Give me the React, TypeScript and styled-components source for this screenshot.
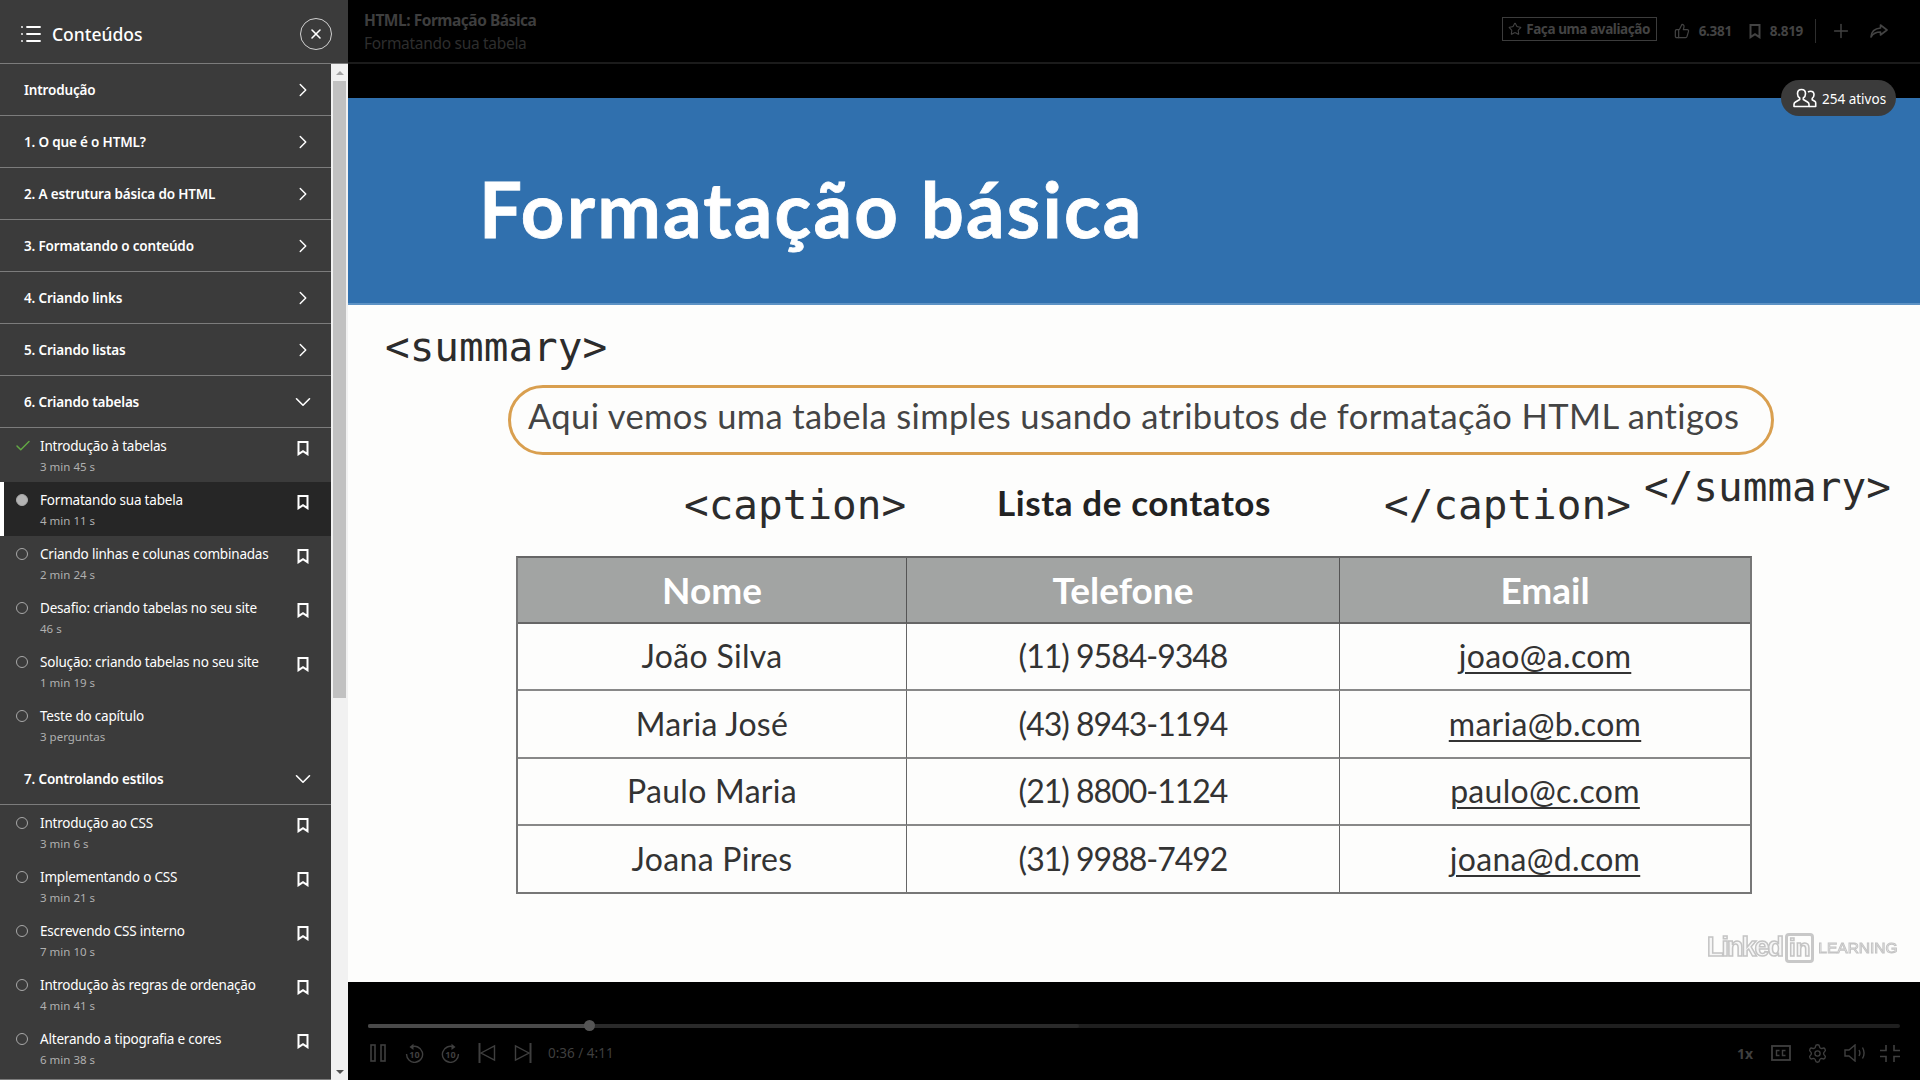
import React from 'react';
import styled, { createGlobalStyle } from 'styled-components';
import { Check, ChevronDown, ChevronRight, List, Plus, Settings, Star, ThumbsUp, X } from 'lucide-react';

const UI_FONT = '"Noto Sans", "Open Sans", sans-serif';
const MONO_FONT = '"DejaVu Sans Mono", "Liberation Mono", monospace';
const SLIDE_FONT = 'Lato, "Noto Sans", sans-serif';

const GlobalStyle = createGlobalStyle`
  html, body { margin: 0; padding: 0; height: 100%; background: #000; overflow: hidden; }
  * { box-sizing: border-box; }
`;

const Page = styled.div`
  display: flex;
  width: 1920px;
  height: 1080px;
  overflow: hidden;
  background: #000;
  font-family: ${UI_FONT};
`;

/* ---------- sidebar ---------- */

const Sidebar = styled.aside`
  flex: 0 0 348px;
  height: 100%;
  display: flex;
  flex-direction: column;
  background: #3b3b3b;
  color: #fff;
`;

const SidebarHead = styled.header`
  flex: 0 0 64px;
  display: flex;
  align-items: center;
  padding: 4px 16px 0 19px;
  border-bottom: 1px solid #7c7c7c;
`;

const SidebarTitle = styled.h2`
  flex: 1;
  margin: 0 0 0 9px;
  font-size: 17.5px;
  font-weight: 500;
`;

const CloseButton = styled.button`
  width: 32px;
  height: 32px;
  padding: 0;
  display: flex;
  align-items: center;
  justify-content: center;
  border: 1px solid #d0d0d0;
  border-radius: 50%;
  background: transparent;
  color: #fff;
`;

const SidebarBody = styled.div`
  flex: 1;
  min-height: 0;
  display: flex;
`;

const Toc = styled.div`
  flex: 0 0 331px;
  height: 1016px;
  overflow: hidden;
  border-bottom: 1px solid #7c7c7c;
`;

const SectionRow = styled.div`
  height: 52px;
  display: flex;
  align-items: center;
  justify-content: space-between;
  padding: 1px 17px 0 24px;
  border-bottom: 1px solid #7c7c7c;
  font-size: 13.5px;
  font-weight: 600;
  letter-spacing: -0.17px;
`;

const OpenChevron = styled(ChevronDown)`
  margin-right: -2px;
`;

const LessonGroup = styled.div`
  padding-bottom: 1px;
`;

const ItemRow = styled.div<{ $active?: boolean }>`
  height: 54px;
  display: flex;
  padding: 9px 22px 0 ${(p) => (p.$active ? 12 : 16)}px;
  background: ${(p) => (p.$active ? '#262626' : 'transparent')};
  border-left: ${(p) => (p.$active ? '4px solid #fff' : 'none')};
`;

const StatusSlot = styled.div`
  flex: 0 0 24px;
  height: 18px;
  display: flex;
  align-items: center;
`;

const DoneMark = styled(Check)`
  margin-left: -2px;
  flex-shrink: 0;
`;

const Radio = styled.span<{ $filled?: boolean }>`
  width: 12px;
  height: 12px;
  border-radius: 50%;
  border: 1px solid #a8a8a8;
  background: ${(p) => (p.$filled ? '#b4b4b4' : 'transparent')};
`;

const ItemText = styled.div`
  flex: 1;
  min-width: 0;
`;

const ItemTitle = styled.div`
  font-size: 13.5px;
  line-height: 18px;
  letter-spacing: -0.2px;
  white-space: nowrap;
`;

const ItemTime = styled.div`
  margin-top: 4px;
  font-size: 11.5px;
  line-height: 15px;
  color: #b0b0b0;
`;

const MarkSlot = styled.span`
  display: flex;
  margin-top: 4px;
  height: 15px;
`;

const Scrollbar = styled.div`
  flex: 0 0 17px;
  display: flex;
  flex-direction: column;
  align-items: center;
  background: #f1f1f1;
`;

const ScrollArrow = styled.div<{ $down?: boolean }>`
  flex: 0 0 17px;
  display: flex;
  align-items: center;
  justify-content: center;
  &::before {
    content: '';
    border-left: 4px solid transparent;
    border-right: 4px solid transparent;
    ${(p) => (p.$down ? 'border-top: 4px solid #505050;' : 'border-bottom: 4px solid #a3a3a3;')}
  }
`;

const ScrollThumb = styled.div`
  flex: 0 0 617px;
  width: 13px;
  margin-right: 1px;
  background: #c1c1c1;
`;

const ScrollRest = styled.div`
  flex: 1;
`;

/* ---------- main column ---------- */

const Main = styled.main`
  flex: 1;
  min-width: 0;
  display: flex;
  flex-direction: column;
  position: relative;
`;

const TopBar = styled.div`
  flex: 0 0 64px;
  display: flex;
  align-items: flex-start;
  justify-content: space-between;
  padding: 8px 32px 0 16px;
  border-bottom: 2px solid #1b1b1b;
`;

const CourseName = styled.div`
  font-size: 15.5px;
  line-height: 24px;
  font-weight: 700;
  letter-spacing: -0.47px;
  color: #3e3e3e;
`;

const LessonName = styled.div`
  font-size: 15.5px;
  line-height: 22px;
  letter-spacing: -0.3px;
  color: #2e2e2e;
`;

const TopActions = styled.div`
  display: flex;
  align-items: center;
  height: 38px;
  margin-top: 4px;
  color: #434343;
`;

const RateButton = styled.div`
  height: 24px;
  width: 155px;
  margin: 0 17px 5px 0;
  display: flex;
  align-items: center;
  justify-content: center;
  gap: 4px;
  border: 1px solid #3c3c3c;
  font-size: 13.5px;
  font-weight: 700;
  letter-spacing: -0.4px;
`;

const Stat = styled.span<{ $gap: number; $mr: number }>`
  display: flex;
  align-items: center;
  gap: ${(p) => p.$gap}px;
  margin-right: ${(p) => p.$mr}px;
  font-size: 13.5px;
  font-weight: 700;
  letter-spacing: -0.3px;
`;

const Divider = styled.span`
  width: 1px;
  height: 24px;
  margin: 0 14px 0 -7px;
  background: #2e2e2e;
`;

const ActionIcon = styled.span`
  display: flex;
  margin-right: 18px;
  &:last-child { margin-right: 0; }
`;

const ActiveBadge = styled.div`
  position: absolute;
  top: 80px;
  right: 24px;
  width: 115px;
  height: 36px;
  display: flex;
  align-items: center;
  gap: 5px;
  padding-left: 12px;
  border-radius: 18px;
  background: #3b3b3b;
  color: #fff;
  font-size: 13.5px;
  z-index: 2;
`;

const BadgeLabel = styled.span`
  margin-top: 2px;
`;

const VideoGap = styled.div`
  flex: 0 0 34px;
`;

const Slide = styled.section`
  flex: 0 0 884px;
  position: relative;
  overflow: hidden;
  background: #fdfdfc;
`;

const SlideBanner = styled.div`
  height: 207px;
  padding: 67px 0 0 131px;
  background: #3070ae;
  border-bottom: 2px solid #5d92c4;
`;

const SlideHeading = styled.h1`
  margin: 0;
  font-family: ${SLIDE_FONT};
  font-size: 76px;
  line-height: 88px;
  font-weight: 700;
  letter-spacing: 2.2px;
  -webkit-text-stroke: 0.8px #fff;
  color: #fff;
`;

const Tag = styled.span<{ $x: number; $y: number }>`
  position: absolute;
  left: ${(p) => p.$x}px;
  top: ${(p) => p.$y}px;
  font-family: ${MONO_FONT};
  font-size: 41px;
  line-height: 46px;
  color: #2c2c2c;
`;

const Callout = styled.div`
  position: absolute;
  left: 160px;
  top: 287px;
  width: 1266px;
  height: 70px;
  display: flex;
  align-items: center;
  padding: 0 0 9px 17px;
  border: 3px solid #d99f4f;
  border-radius: 35px;
  font-family: ${SLIDE_FONT};
  font-size: 34.5px;
  letter-spacing: 0.38px;
  color: #444;
  white-space: nowrap;
`;

const CaptionText = styled.div`
  position: absolute;
  left: 649px;
  top: 382px;
  font-family: ${SLIDE_FONT};
  font-size: 35px;
  line-height: 44px;
  font-weight: 700;
  letter-spacing: 0.6px;
  color: #222;
  white-space: nowrap;
`;

const ContactTable = styled.div`
  position: absolute;
  left: 168px;
  top: 458px;
  width: 1236px;
  display: grid;
  grid-template-columns: 388px 433px 1fr;
  grid-template-rows: 66px repeat(3, 67.4px) 66px;
  border: 2px solid #777;
  border-top-color: #666;
`;

const HeadCell = styled.div`
  display: flex;
  align-items: center;
  justify-content: center;
  padding-bottom: 2px;
  background: #a2a4a3;
  border-left: 1px solid #555;
  border-bottom: 2px solid #666;
  font-family: ${SLIDE_FONT};
  font-size: 37px;
  font-weight: 700;
  color: #fff;
  &:first-child { border-left: none; }
`;

const BodyCell = styled.div<{ $first?: boolean; $last?: boolean; $compact?: boolean }>`
  display: flex;
  align-items: center;
  justify-content: center;
  padding-bottom: 2px;
  border-left: ${(p) => (p.$first ? 'none' : '1px solid #666')};
  border-bottom: ${(p) => (p.$last ? 'none' : '2px solid #888')};
  font-family: ${SLIDE_FONT};
  font-size: 32px;
  letter-spacing: ${(p) => (p.$compact ? '-1px' : '0.3px')};
  color: #333;
`;

const MailLink = styled.span`
  text-decoration: underline;
  text-underline-offset: 4px;
  text-decoration-thickness: 2px;
`;

const Watermark = styled.div`
  position: absolute;
  left: 1359px;
  top: 834px;
  display: flex;
  align-items: center;
  font-family: "Liberation Sans", sans-serif;
  font-weight: 700;
  color: #f6f6f6;
  -webkit-text-stroke: 1.5px #c4c4c4;
  filter: blur(0.7px);
`;

const WatermarkWord = styled.span`
  font-size: 27px;
  letter-spacing: -2px;
`;

const WatermarkBox = styled.span`
  margin: 0 4px 0 3px;
  padding: 0 1px;
  font-size: 24px;
  line-height: 24px;
  border: 3px solid #c8c8c8;
  border-radius: 4px;
`;

const WatermarkSmall = styled.span`
  font-size: 15.5px;
  font-weight: 400;
  -webkit-text-stroke: 1px #c4c4c4;
`;

/* ---------- player controls ---------- */

const Controls = styled.div`
  flex: 1;
  padding: 42px 20px 0;
  color: #3f3f3f;
`;

const Track = styled.div`
  position: relative;
  height: 4px;
  border-radius: 2px;
  background: #1f1f1f;
`;

const TrackFill = styled.div<{ $tone: string }>`
  position: absolute;
  left: 0;
  top: 0;
  bottom: 0;
  border-radius: 2px;
  background: ${(p) => p.$tone};
`;

const Knob = styled.div`
  position: absolute;
  top: -4px;
  width: 11px;
  height: 11px;
  margin-left: -5px;
  border-radius: 50%;
  background: #555;
`;

const ControlRow = styled.div`
  display: flex;
  align-items: center;
  height: 24px;
  margin-top: 13px;
  padding-left: 2px;
`;

const IconSlot = styled.span<{ $w: number; $mr: number }>`
  display: flex;
  justify-content: center;
  width: ${(p) => p.$w}px;
  margin-right: ${(p) => p.$mr}px;
`;

const TimeLabel = styled.span`
  flex: 1;
  font-size: 13.5px;
`;

const SpeedLabel = styled.span`
  margin-right: 18px;
  font-size: 14px;
  font-weight: 700;
`;

const BookmarkIcon = ({ color = '#fff' }: { color?: string }) => (
  <svg width="12" height="15" viewBox="0 0 12 15" fill="none" stroke={color} strokeWidth="2">
    <path d="M1.5 1h9v12.2L6 10.2l-4.5 3z" />
  </svg>
);

const PeopleIcon = () => (
  <svg width="24" height="20" viewBox="0 0 24 20" fill="none" stroke="#fff" strokeWidth="1.6" strokeLinejoin="round">
    <path d="M8.500 1.500c2.400 0 4 1.800 4 4.200 0 1.800-.9 3.500-2.200 4.300v1.500l4.200 2.500c1 .6 1.500 1.400 1.500 2.300v2.200H1v-2.200c0-.9.5-1.700 1.500-2.300l4.200-2.500V10C5.400 9.200 4.500 7.500 4.500 5.700c0-2.400 1.600-4.200 4-4.200z" />
    <path d="M15 4c.8-.6 1.500-.8 2.500-.8 2 0 3.500 1.500 3.500 3.600 0 1.600-.8 2.900-1.800 3.600v1.300l2.500 1.500c.6.4 1 1 1 1.800v3.500H16" />
  </svg>
);

const ShareIcon = () => (
  <svg width="18" height="14" viewBox="0 0 18 14" fill="none" stroke="#434343" strokeWidth="1.6" strokeLinejoin="round">
    <path d="M10.500 1l6.500 5-6.500 5V8C6 8 3 9.500 1 13c.3-5 3.500-8.500 9.500-9z" />
  </svg>
);

const PauseIcon = () => (
  <svg width="16" height="18" viewBox="0 0 16 18" fill="none" stroke="#3f3f3f" strokeWidth="1.6">
    <rect x="1" y="1" width="4" height="16" />
    <rect x="11" y="1" width="4" height="16" />
  </svg>
);

const SkipTenIcon = ({ forward }: { forward?: boolean }) => (
  <svg width="19" height="20" viewBox="0 0 19 20" fill="none" stroke="#3f3f3f" strokeWidth="1.4">
    <g transform={forward ? 'matrix(-1 0 0 1 19 0)' : undefined}>
      <path d="M6 4.200A8 8 0 1 1 1.600 11" />
      <path d="M8.500 0.800L4.500 4l4 3" fill="#3f3f3f" stroke="none" />
    </g>
    <text x="9.500" y="14.500" textAnchor="middle" fontSize="9" fontWeight="700" fill="#3f3f3f" stroke="none" fontFamily="Noto Sans, sans-serif">10</text>
  </svg>
);

const SkipIcon = ({ next }: { next?: boolean }) => (
  <svg width="18" height="20" viewBox="0 0 18 20" fill="none" stroke="#3f3f3f" strokeWidth="1.4">
    <g transform={next ? 'matrix(-1 0 0 1 18 0)' : undefined}>
      <path d="M1.500 0v20" strokeWidth="2" />
      <path d="M3 10L16.500 3v14z" />
    </g>
  </svg>
);

const CcIcon = () => (
  <svg width="20" height="16" viewBox="0 0 20 16" fill="none" stroke="#3f3f3f" strokeWidth="1.800">
    <rect x="1" y="1" width="18" height="14" />
    <path d="M8.500 5.500H5.500v5h3M14.500 5.500h-3v5h3" strokeWidth="1.400" />
  </svg>
);

const VolumeIcon = () => (
  <svg width="22" height="18" viewBox="0 0 22 18" fill="none" stroke="#3f3f3f" strokeWidth="1.400">
    <path d="M1 6h4l6-5v16l-6-5H1z" />
    <path d="M15 6c1.200 2 1.200 4 0 6M18.500 3.500c2 3.500 2 7.500 0 11" />
  </svg>
);

const ExitFullIcon = () => (
  <svg width="20" height="17" viewBox="0 0 20 17" fill="none" stroke="#3f3f3f" strokeWidth="1.600">
    <path d="M6 0v5.500H0M14 0v5.500h6M6 17v-5.500H0M14 17v-5.500h6" />
  </svg>
);

type Lesson = { title: string; time: string; done?: boolean; active?: boolean; noMark?: boolean };

const closedSections = [
  'Introdução',
  '1. O que é o HTML?',
  '2. A estrutura básica do HTML',
  '3. Formatando o conteúdo',
  '4. Criando links',
  '5. Criando listas',
];

const tableLessons: Lesson[] = [
  { title: 'Introdução à tabelas', time: '3 min 45 s', done: true },
  { title: 'Formatando sua tabela', time: '4 min 11 s', active: true },
  { title: 'Criando linhas e colunas combinadas', time: '2 min 24 s' },
  { title: 'Desafio: criando tabelas no seu site', time: '46 s' },
  { title: 'Solução: criando tabelas no seu site', time: '1 min 19 s' },
  { title: 'Teste do capítulo', time: '3 perguntas', noMark: true },
];

const styleLessons: Lesson[] = [
  { title: 'Introdução ao CSS', time: '3 min 6 s' },
  { title: 'Implementando o CSS', time: '3 min 21 s' },
  { title: 'Escrevendo CSS interno', time: '7 min 10 s' },
  { title: 'Introdução às regras de ordenação', time: '4 min 41 s' },
  { title: 'Alterando a tipografia e cores', time: '6 min 38 s' },
];

const contacts = [
  ['João Silva', '(11) 9584-9348', 'joao@a.com'],
  ['Maria José', '(43) 8943-1194', 'maria@b.com'],
  ['Paulo Maria', '(21) 8800-1124', 'paulo@c.com'],
  ['Joana Pires', '(31) 9988-7492', 'joana@d.com'],
];

function LessonRow({ lesson }: { lesson: Lesson }) {
  return (
    <ItemRow $active={lesson.active}>
      <StatusSlot>
        {lesson.done ? <DoneMark size={18} color="#62a744" strokeWidth={2} /> : <Radio $filled={lesson.active} />}
      </StatusSlot>
      <ItemText>
        <ItemTitle>{lesson.title}</ItemTitle>
        <ItemTime>{lesson.time}</ItemTime>
      </ItemText>
      {!lesson.noMark && (
        <MarkSlot>
          <BookmarkIcon />
        </MarkSlot>
      )}
    </ItemRow>
  );
}

export default function App() {
  return (
    <Page>
      <GlobalStyle />
      <Sidebar>
        <SidebarHead>
          <List size={24} strokeWidth={1.8} />
          <SidebarTitle>Conteúdos</SidebarTitle>
          <CloseButton>
            <X size={16} strokeWidth={2.4} />
          </CloseButton>
        </SidebarHead>
        <SidebarBody>
          <Toc>
            {closedSections.map((name) => (
              <SectionRow key={name}>
                {name}
                <ChevronRight size={22} strokeWidth={1.6} />
              </SectionRow>
            ))}
            <SectionRow>
              6. Criando tabelas
              <OpenChevron size={26} strokeWidth={1.5} />
            </SectionRow>
            <LessonGroup>
              {tableLessons.map((lesson) => (
                <LessonRow key={lesson.title} lesson={lesson} />
              ))}
            </LessonGroup>
            <SectionRow>
              7. Controlando estilos
              <OpenChevron size={26} strokeWidth={1.5} />
            </SectionRow>
            <LessonGroup>
              {styleLessons.map((lesson) => (
                <LessonRow key={lesson.title} lesson={lesson} />
              ))}
            </LessonGroup>
          </Toc>
          <Scrollbar>
            <ScrollArrow />
            <ScrollThumb />
            <ScrollRest />
            <ScrollArrow $down />
          </Scrollbar>
        </SidebarBody>
      </Sidebar>

      <Main>
        <TopBar>
          <div>
            <CourseName>HTML: Formação Básica</CourseName>
            <LessonName>Formatando sua tabela</LessonName>
          </div>
          <TopActions>
            <RateButton>
              <Star size={14} strokeWidth={1.8} />
              Faça uma avaliação
            </RateButton>
            <Stat $gap={9} $mr={17}>
              <ThumbsUp size={16} strokeWidth={1.8} />
              6.381
            </Stat>
            <Stat $gap={9} $mr={19}>
              <BookmarkIcon color="#434343" />
              8.819
            </Stat>
            <Divider />
            <ActionIcon>
              <Plus size={22} strokeWidth={1.6} />
            </ActionIcon>
            <ActionIcon>
              <ShareIcon />
            </ActionIcon>
          </TopActions>
        </TopBar>
        <ActiveBadge>
          <PeopleIcon />
          <BadgeLabel>254 ativos</BadgeLabel>
        </ActiveBadge>
        <VideoGap />
        <Slide>
          <SlideBanner>
            <SlideHeading>Formatação básica</SlideHeading>
          </SlideBanner>
          <Tag $x={37} $y={226}>&lt;summary&gt;</Tag>
          <Callout>Aqui vemos uma tabela simples usando atributos de formatação HTML antigos</Callout>
          <Tag $x={336} $y={384}>&lt;caption&gt;</Tag>
          <CaptionText>Lista de contatos</CaptionText>
          <Tag $x={1036} $y={384}>&lt;/caption&gt;</Tag>
          <Tag $x={1296} $y={366}>&lt;/summary&gt;</Tag>
          <ContactTable>
            <HeadCell>Nome</HeadCell>
            <HeadCell>Telefone</HeadCell>
            <HeadCell>Email</HeadCell>
            {contacts.map((row, i) => (
              <React.Fragment key={row[0]}>
                <BodyCell $first $last={i === contacts.length - 1}>{row[0]}</BodyCell>
                <BodyCell $compact $last={i === contacts.length - 1}>{row[1]}</BodyCell>
                <BodyCell $last={i === contacts.length - 1}>
                  <MailLink>{row[2]}</MailLink>
                </BodyCell>
              </React.Fragment>
            ))}
          </ContactTable>
          <Watermark>
            <WatermarkWord>Linked</WatermarkWord>
            <WatermarkBox>in</WatermarkBox>
            <WatermarkSmall>LEARNING</WatermarkSmall>
          </Watermark>
        </Slide>
        <Controls>
          <Track>
            <TrackFill $tone="#2a2a2a" style={{ width: '46.4%' }} />
            <TrackFill $tone="#4a4a4a" style={{ width: '14.4%' }} />
            <Knob style={{ left: '14.4%' }} />
          </Track>
          <ControlRow>
            <IconSlot $w={16} $mr={19}><PauseIcon /></IconSlot>
            <IconSlot $w={19} $mr={17}><SkipTenIcon /></IconSlot>
            <IconSlot $w={19} $mr={18}><SkipTenIcon forward /></IconSlot>
            <IconSlot $w={18} $mr={18}><SkipIcon /></IconSlot>
            <IconSlot $w={18} $mr={16}><SkipIcon next /></IconSlot>
            <TimeLabel>0:36 / 4:11</TimeLabel>
            <SpeedLabel>1x</SpeedLabel>
            <IconSlot $w={20} $mr={16}><CcIcon /></IconSlot>
            <IconSlot $w={21} $mr={16}><Settings size={21} strokeWidth={1.5} /></IconSlot>
            <IconSlot $w={22} $mr={14}><VolumeIcon /></IconSlot>
            <IconSlot $w={20} $mr={0}><ExitFullIcon /></IconSlot>
          </ControlRow>
        </Controls>
      </Main>
    </Page>
  );
}
